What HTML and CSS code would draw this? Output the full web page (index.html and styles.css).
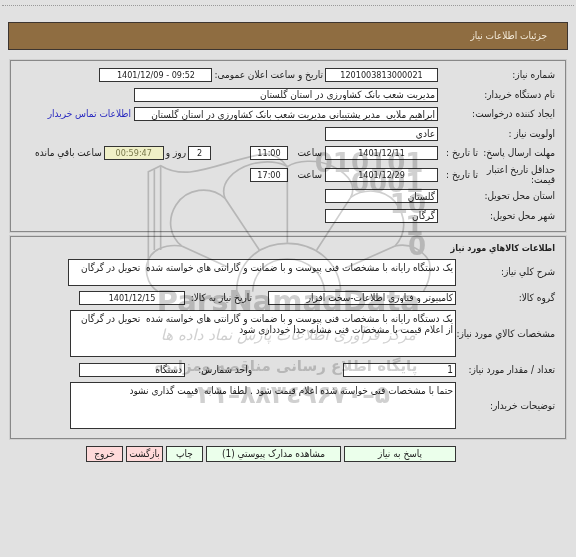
FILE: index.html
```
<!DOCTYPE html>
<html lang="fa" dir="rtl">
<head>
<meta charset="utf-8">
<title>جزئیات اطلاعات نیاز</title>
<link rel="stylesheet" href="styles.css">
</head>
<body>
<hr class="divider">
<h1 class="banner">جزئیات اطلاعات نیاز</h1>
<main class="page">
  <form>
    <section class="panel need">
      <div class="row">
        <label class="name" for="number">شماره نیاز:</label>
        <input class="mid center" id="number" value="1201003813000021" readonly>
        <label class="note" for="announce">تاریخ و ساعت اعلان عمومی:</label>
        <input class="mid center" id="announce" dir="ltr" value="1401/12/09 - 09:52" readonly>
      </div>
      <div class="row">
        <label class="name" for="buyer">نام دستگاه خریدار:</label>
        <input class="long" id="buyer" value="مدیریت شعب بانک کشاورزی در استان گلستان" readonly>
      </div>
      <div class="row">
        <label class="name" for="creator">ایجاد کننده درخواست:</label>
        <input class="long" id="creator" value="ابراهیم ملایی  مدیر پشتیبانی مدیریت شعب بانک کشاورزی در استان گلستان" readonly>
        <a class="contact" href="#contact">اطلاعات تماس خریدار</a>
      </div>
      <div class="row">
        <label class="name" for="priority">اولویت نیاز :</label>
        <input class="mid" id="priority" value="عادي" readonly>
      </div>
      <div class="row">
        <span class="name short">مهلت ارسال پاسخ:</span>
        <label class="until" for="deadline">تا تاریخ :</label>
        <input class="mid center" id="deadline" value="1401/12/11" readonly>
        <label class="hour" for="deadline-hour">ساعت</label>
        <input class="time center" id="deadline-hour" value="11:00" readonly>
        <input class="days center" id="days" value="2" readonly>
        <label class="note" for="days">روز و</label>
        <input class="left center" id="left" value="00:59:47" readonly>
        <label class="note" for="left">ساعت باقي مانده</label>
      </div>
      <div class="row">
        <span class="name short">حداقل تاریخ اعتبار قیمت:</span>
        <label class="until" for="valid">تا تاریخ :</label>
        <input class="mid center" id="valid" value="1401/12/29" readonly>
        <label class="hour" for="valid-hour">ساعت</label>
        <input class="time center" id="valid-hour" value="17:00" readonly>
      </div>
      <div class="row">
        <label class="name" for="province">استان محل تحویل:</label>
        <input class="mid" id="province" value="گلستان" readonly>
      </div>
      <div class="row">
        <label class="name" for="city">شهر محل تحویل:</label>
        <input class="mid" id="city" value="گرگان" readonly>
      </div>
    </section>

    <section class="panel goods">
      <h2>اطلاعات کالاهاي مورد نیاز</h2>
      <div class="row">
        <label class="name" for="summary">شرح کلي نیاز:</label>
        <textarea class="summary" id="summary" readonly>یک دستگاه رایانه با مشخصات فنی پیوست و با ضمانت و گارانتی های خواسته شده  تحویل در گرگان</textarea>
      </div>
      <div class="row">
        <label class="name" for="group">گروه کالا:</label>
        <input class="group" id="group" value="کامپیوتر و فناوری اطلاعات-سخت افزار" readonly>
        <label class="second" for="need-date">تاریخ نیاز به کالا:</label>
        <input class="end center" id="need-date" value="1401/12/15" readonly>
      </div>
      <div class="row">
        <label class="name" for="spec">مشخصات کالاي مورد نیاز:</label>
        <textarea class="detail" id="spec" readonly>یک دستگاه رایانه با مشخصات فنی پیوست و با ضمانت و گارانتی های خواسته شده  تحویل در گرگان
از اعلام قیمت با مشخصات فنی مشابه جدا خودداری شود</textarea>
      </div>
      <div class="row">
        <label class="name" for="count">تعداد / مقدار مورد نیاز:</label>
        <input class="mid" id="count" value="1" readonly>
        <label class="second wide" for="unit">واحد شمارش:</label>
        <input class="end" id="unit" value="دستگاه" readonly>
      </div>
      <div class="row">
        <label class="name" for="remarks">توضیحات خریدار:</label>
        <textarea class="detail" id="remarks" readonly>حتما با مشخصات فنی خواسته شده اعلام قیمت شود . لطفا مشابه  قیمت گذاری نشود</textarea>
      </div>
    </section>

    <div class="actions">
      <button class="reply" type="button">پاسخ به نیاز</button>
      <button class="files" type="button">مشاهده مدارک پیوستي (1)</button>
      <button type="button">چاپ</button>
      <button class="leave" type="button">بازگشت</button>
      <button class="leave" type="button">خروج</button>
    </div>
  </form>

  <svg class="watermark" viewBox="0 0 960 840" aria-hidden="true">
    <g fill="none" stroke="#cfcfcf" stroke-width="5">
      <path d="M55 395V95L92 77Q130 100 180 96C250 88 320 55 400 42Q440 38 472 80"/>
      <path d="M73 330V88M92 330V77"/>
      <path d="M472 308V80C450 66 410 60 365 72C310 88 268 130 285 175L388 330"/>
      <path d="M285 175C240 135 170 145 138 195C110 240 120 290 155 318L295 382"/>
      <path d="M155 318C110 312 60 325 50 375C45 410 60 440 85 455"/>
      <path d="M472 80C500 62 560 55 610 80C660 105 680 140 662 172L560 330"/>
      <path d="M662 172C700 145 760 145 795 185C830 230 830 280 795 318L645 385"/>
      <path d="M795 318C840 308 880 330 898 365C905 400 895 430 880 455"/>
      <path d="M320 455C320 375 380 310 472 310S630 375 632 455"/>
      <path d="M368 455C370 400 410 357 472 357S580 400 584 455"/>
    </g>
    <g fill="#d0d0d0">
      <g class="bits">
        <text x="880" y="96">010101</text>
        <text x="880" y="156">0001</text>
        <text x="888" y="218">10</text>
        <text x="880" y="284">1</text>
        <text x="888" y="346">0</text>
      </g>
      <text class="brand" x="475" y="512">ParsNamadData</text>
      <text class="motto" x="475" y="600">مرکز فرآوری اطلاعات پارس نماد داده ها</text>
      <text class="portal" x="468" y="692">پایگاه اطلاع رسانی مناقصه ومزایده</text>
      <text class="phone" x="468" y="788">۰۲۱–۸۸۳٤۹۶۷۰–۵</text>
    </g>
  </svg>
</main>
</body>
</html>
```
FILE: styles.css
```
* {
  box-sizing: border-box;
}

body {
  margin: 0;
  min-height: 100vh;
  background: #e1e1e1;
  color: #222;
  font: 10px/12px "DejaVu Sans Condensed", "DejaVu Sans", sans-serif;
}

.divider {
  margin: 5px 2px 16px;
  border: 0;
  border-top: 1px dotted #999;
}

.banner {
  margin: 0 8px 10px;
  padding: 7px 20px;
  border: 1px solid #3d3530;
  background: #8f6d41;
  color: #f3ead9;
  font-size: 10px;
  font-weight: normal;
  line-height: 12px;
}

.page {
  position: relative;
  padding: 0 10px;
}

.panel {
  padding: 4px 10px;
  border: 1px solid #888;
  box-shadow: 0 0 0 1px #d0d0d0;
}

.need {
  display: grid;
  grid-template-rows: 20px 19px 20px 19px 20px 23px 20px 19px;
  padding-bottom: 6px;
  margin-bottom: 4px;
}

.row {
  display: flex;
  align-items: center;
}

.name {
  flex: 0 0 117px;
  white-space: nowrap;
}

.short {
  flex-basis: 77px;
  line-height: 10px;
  white-space: normal;
}

.until {
  flex: 0 0 40px;
}

.hour {
  flex: 0 0 37px;
  padding-right: 3px;
}

.note {
  padding: 0 2px;
  white-space: nowrap;
}

.contact {
  padding-right: 3px;
  color: #2a2ac0;
  text-decoration: none;
  white-space: nowrap;
}

input,
textarea {
  margin: 0;
  padding: 0 2px;
  border: 1px solid #333;
  border-radius: 0;
  background: #fff;
  color: #222;
  font: inherit;
}

input {
  height: 14px;
}

textarea {
  resize: none;
  overflow: hidden;
  line-height: 11px;
  padding-top: 2px;
}

.center {
  font-size: 9px;
  text-align: center;
}

.mid {
  width: 113px;
}

.long {
  width: 304px;
}

.time {
  width: 38px;
  margin-left: 39px;
}

.days {
  width: 23px;
}

.left {
  width: 60px;
  background: #f0f0c8;
  color: #77774a;
}

.goods {
  display: grid;
  grid-template-rows: 15px 32px 19px 53px 19px 53px;
  padding-bottom: 6px;
}

.goods h2 {
  margin: 0;
  font-size: 9px;
  line-height: 15px;
}

.goods .name {
  flex-basis: 99px;
}

.summary {
  width: 388px;
  height: 27px;
}

.detail {
  width: 386px;
  height: 47px;
}

.group {
  width: 188px;
}

.second {
  flex: 0 0 83px;
  padding-right: 16px;
  white-space: nowrap;
}

.wide {
  flex-basis: 158px;
  padding-right: 91px;
}

.end {
  width: 106px;
}

.actions {
  display: flex;
  gap: 3px;
  padding: 7px 110px 0 0;
}

button {
  width: 37px;
  height: 16px;
  padding: 0;
  border: 1px solid #333;
  border-radius: 0;
  background: #ebffeb;
  color: #222;
  font: inherit;
  white-space: nowrap;
}

.reply {
  width: 112px;
}

.files {
  width: 135px;
}

.leave {
  background: #ffdada;
}

.watermark {
  position: absolute;
  top: 80px;
  left: 130px;
  width: 320px;
  height: 280px;
  overflow: visible;
  pointer-events: none;
  mix-blend-mode: multiply;
}

.bits {
  font: bold 78px "DejaVu Sans", sans-serif;
  text-anchor: end;
  direction: ltr;
}

.brand {
  font: bold 87px "DejaVu Sans", sans-serif;
  text-anchor: middle;
}

.motto {
  font: italic 45px "DejaVu Sans", sans-serif;
  text-anchor: middle;
}

.portal {
  font: bold 45px "DejaVu Sans", sans-serif;
  text-anchor: middle;
}

.phone {
  font: bold 75px "DejaVu Sans", sans-serif;
  text-anchor: middle;
  direction: ltr;
}
```
